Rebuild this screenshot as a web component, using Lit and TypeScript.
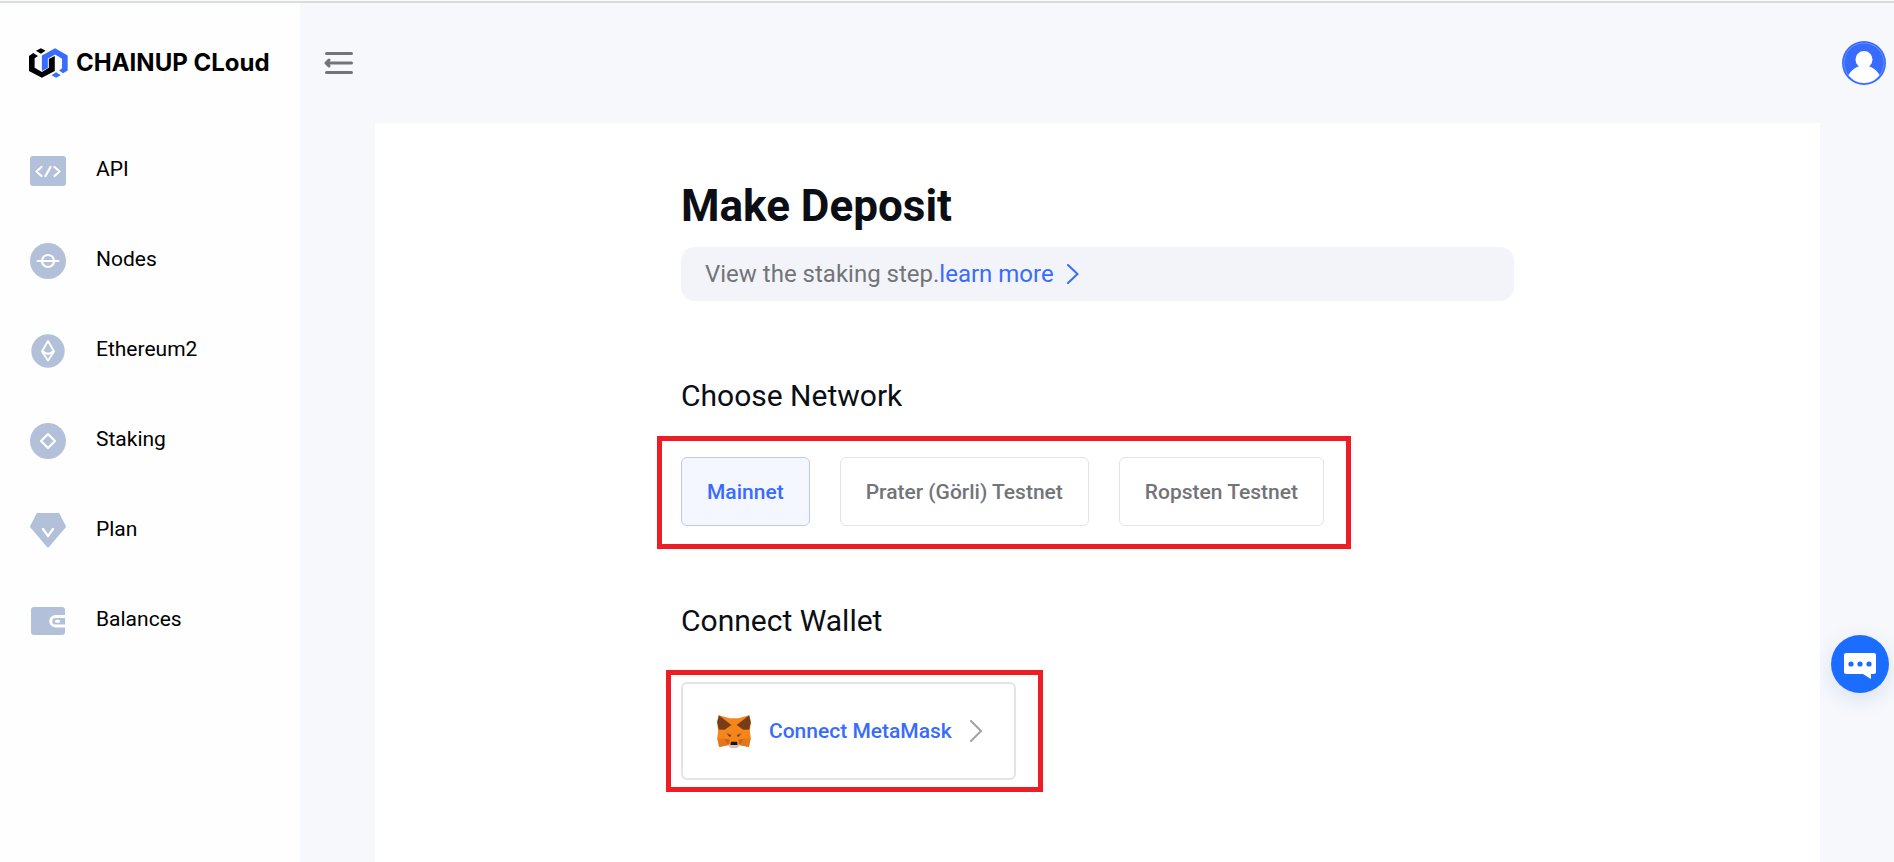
import { LitElement, html, css, svg } from "lit";
import { customElement, state } from "lit/decorators.js";

const navIcons = {
  api: svg`<rect x="0" y="3" width="36" height="30" rx="3" fill="#b2c0d9"/><path d="M11.500 14l-5 4.500 5 4.500M24.500 14l5 4.500-5 4.500M20.500 14l-5 9" fill="none" stroke="#fff" stroke-width="2.200" stroke-linecap="round" stroke-linejoin="round"/>`,
  nodes: svg`<circle cx="18" cy="18" r="18" fill="#b2c0d9"/><circle cx="18" cy="18" r="6" fill="none" stroke="#fff" stroke-width="2.200"/><path d="M7.500 18h21" stroke="#fff" stroke-width="2.200" stroke-linecap="round"/>`,
  eth: svg`<circle cx="18" cy="18" r="16.700" fill="#b2c0d9"/><path d="M18 8l-6 10.500 6 9 6-9zM12 18.500l6 2.500 6-2.500" fill="none" stroke="#fff" stroke-width="2" stroke-linejoin="round"/>`,
  staking: svg`<circle cx="18" cy="18" r="18" fill="#b2c0d9"/><path d="M18 11l7 7-7 7-7-7z" fill="none" stroke="#fff" stroke-width="2.200" stroke-linejoin="round"/>`,
  plan: svg`<path d="M7.500 2h21L35 14.500 18 34.500 1 14.500z" fill="#b2c0d9" stroke="#b2c0d9" stroke-width="2" stroke-linejoin="round" transform="translate(0 -1)"/><path d="M13 16l5 7 5-7" fill="none" stroke="#fff" stroke-width="2.200" stroke-linecap="round" stroke-linejoin="round"/>`,
  balances: svg`<rect x="1" y="4" width="34" height="28" rx="3" fill="#b2c0d9"/><path d="M35 13.500H25.500a4.700 4.700 0 0 0 0 9.400H35" fill="none" stroke="#fff" stroke-width="3"/><rect x="25" y="16.700" width="5" height="3" rx="1.500" fill="#fff"/>`,
};

const navItems: { label: string; icon: keyof typeof navIcons }[] = [
  { label: "API", icon: "api" },
  { label: "Nodes", icon: "nodes" },
  { label: "Ethereum2", icon: "eth" },
  { label: "Staking", icon: "staking" },
  { label: "Plan", icon: "plan" },
  { label: "Balances", icon: "balances" },
];

const networks = ["Mainnet", "Prater (Görli) Testnet", "Ropsten Testnet"];

@customElement("app-root")
export class AppRoot extends LitElement {
  @state() private network = "Mainnet";

  static styles = css`
    :host {
      display: flex;
      flex-direction: column;
      min-height: 100vh;
      box-sizing: border-box;
      font-family: Roboto, "Liberation Sans", sans-serif;
      color: #0b0e14;
      background: #f6f8fc;
    }
    *, *::before, *::after { box-sizing: border-box; }
    svg { display: block; flex: none; }
    a { color: inherit; text-decoration: none; }
    button { font: inherit; cursor: pointer; }
    h1, h2, p { margin: 0; }
    .topline { height: 3px; background: #dadddd; border-top: 1px solid #fafbfb; }
    .shell { display: flex; flex: 1; }
    .sidebar { flex: none; width: 300px; background: #fefefe; }
    .logo {
      display: flex; align-items: center; gap: 8px; height: 120px; padding-left: 29px;
      font: 700 24px/30px Inter, sans-serif; color: #000;
    }
    .nav { padding-top: 3px; }
    .nav a { display: flex; align-items: center; gap: 30px; height: 90px; padding-left: 30px; color: #000; }
    .nav span { font-size: 21px; line-height: 24px; padding-bottom: 4px; }
    .main { display: flex; flex-direction: column; flex: 1; min-width: 0; }
    .header { display: flex; align-items: center; justify-content: space-between; height: 120px; padding: 0 8px 0 24px; }
    .icon-button { padding: 0; border: 0; background: none; border-radius: 50%; }
    .panel { flex: 1; margin: 0 74px 0 75px; padding: 56px 24px 82px; background: #fff; }
    .content { max-width: 833px; margin: 0 auto; }
    h1 { font-size: 44px; line-height: 54px; font-weight: 700; }
    .notice {
      display: flex; align-items: center; height: 54px; margin-top: 14px; padding: 0 24px;
      border-radius: 14px; background: #f3f4f9; color: #727478; font-size: 24px;
    }
    .notice a { display: flex; align-items: center; gap: 13px; color: #386bff; }
    h2 { font-size: 30px; line-height: 38px; font-weight: 400; }
    .network, .wallet { margin-top: 76px; }
    .marked { position: relative; display: flex; width: fit-content; margin-top: 42px; }
    .marked::after { content: ""; position: absolute; border: 5px solid #ee1c25; pointer-events: none; }
    .choices { gap: 30px; }
    .choices::after { inset: -21px -27px -23px -24px; }
    .choice {
      height: 69px; padding: 0 25px; border: 1px solid #e4e4e6; border-radius: 6px;
      background: #fff; color: #727478; font-size: 21px; font-weight: 500; white-space: nowrap;
    }
    .choice[aria-pressed="true"] { border-color: #b8c9ff; background: #f4f7ff; color: #386bff; }
    .connectors::after { inset: -12px -27px -12px -15px; }
    .connect {
      display: flex; align-items: center; height: 98px; padding: 0 32px 0 34px; border: 2px solid #e3e4ea;
      border-radius: 6px; background: #fff; color: #386bff; font-size: 21px; font-weight: 500;
    }
    .connect span { margin: 0 18px; }
    .chat {
      position: fixed; right: 5px; bottom: 169px; width: 58px; height: 58px; padding: 0; border: 0;
      border-radius: 50%; background: #1b6dff; box-shadow: 0 6px 20px rgba(60, 100, 170, 0.16);
    }
  `;

  render() {
    return html`
      <div class="topline"></div>
      <div class="shell">
        <aside class="sidebar">
          <a class="logo" href="#">
            <svg width="39" height="30" viewBox="0 0 118 90" aria-hidden="true">
              <path d="M21 8L36 0l14 8-14 9zM0 24l13-9 14 9-10 7v28l22 13 21-13V33l18-9v45L39 90 0 69z" fill="#000"/>
              <path d="M39 22L79 0l38 22v46l-14 8-12-8 9-7V32L79 19 57 32v28l-18 9zM68 82l14-9 14 9-14 8z" fill="#386bff"/>
            </svg>
            <span>CHAINUP CLoud</span>
          </a>
          <nav class="nav">
            ${navItems.map(
              (item) => html`<a href="#">
                <svg width="36" height="36" viewBox="0 0 36 36" aria-hidden="true">${navIcons[item.icon]}</svg>
                <span>${item.label}</span>
              </a>`
            )}
          </nav>
        </aside>
        <main class="main">
          <header class="header">
            <button class="icon-button" aria-label="Collapse menu">
              <svg width="29" height="24" viewBox="0 0 29 24" fill="none" stroke="#727478" stroke-width="3" stroke-linecap="round" stroke-linejoin="round">
                <path d="M2.500 2.500h25M2.500 12h25M2.500 21.500h25M5 9l-3 3 3 3"/>
              </svg>
            </button>
            <button class="icon-button" aria-label="Account">
              <svg width="44" height="44" viewBox="0 0 44 44">
                <circle cx="22" cy="22" r="22" fill="#386bff"/>
                <circle cx="22" cy="22" r="20" fill="none" stroke="#fff" stroke-opacity="0.300" stroke-width="0.800"/>
                <circle cx="22" cy="18.500" r="8.500" fill="#fff"/>
                <path d="M6.500 34C11 27 16 24.500 22 24.500S33 27 37.500 34C34 39 28 42 22 42S10 39 6.500 34z" fill="#fff"/>
              </svg>
            </button>
          </header>
          <section class="panel">
            <div class="content">
              <h1>Make Deposit</h1>
              <div class="notice">
                <span>View the staking step.</span>
                <a href="#">learn more
                  <svg width="12" height="20" viewBox="0 0 12 20" fill="none" stroke="#386bff" stroke-width="2" stroke-linecap="round"><path d="M1 1l9.500 9L1 19"/></svg>
                </a>
              </div>
              <h2 class="network">Choose Network</h2>
              <div class="marked choices">
                ${networks.map(
                  (name) => html`<button
                    class="choice"
                    aria-pressed=${this.network === name ? "true" : "false"}
                    @click=${() => (this.network = name)}
                  >${name}</button>`
                )}
              </div>
              <h2 class="wallet">Connect Wallet</h2>
              <div class="marked connectors">
                <button class="connect">
                  <svg width="34" height="33" viewBox="0 0 102 100" aria-hidden="true">
                    <path d="M5 1l33 9h26L97 1l5 21-3 27 3 21-6 27-26-5H32L6 97 0 70l3-21-3-27z" fill="#f6851b"/>
                    <path d="M5 1l38 29-20 15-18-1-5-22zM97 1L59 30l20 15 18-1 5-22z" fill="#763d16"/>
                    <path d="M1 72h20l13 19L6 97zM101 72H81L68 91l28 6z" fill="#e4761b"/>
                    <path d="M21 72l17 3-4 16zM81 72l-17 3 4 16zM26 52l17 8-4 8zM76 52l-17 8 4 8z" fill="#cd6116"/>
                    <path d="M30 58l12 3-3 6zM72 58l-12 3 3 6z" fill="#46444f"/>
                    <path d="M32 91l10-5h18l10 5-9 9H41z" fill="#d7c1b3"/>
                    <path d="M42 81h18l2 10H40z" fill="#161616"/>
                  </svg>
                  <span>Connect MetaMask</span>
                  <svg width="12" height="22" viewBox="0 0 12 22" fill="none" stroke="#a0a3ab" stroke-width="2" stroke-linecap="round"><path d="M1 1l10 10L1 21"/></svg>
                </button>
              </div>
            </div>
          </section>
        </main>
      </div>
      <button class="chat" aria-label="Open chat">
        <svg width="58" height="58" viewBox="0 0 58 58">
          <path d="M15 18h28a2 2 0 0 1 2 2v17a2 2 0 0 1-2 2h-3v5l-8-5H15a2 2 0 0 1-2-2V20a2 2 0 0 1 2-2z" fill="#fff"/>
          <circle cx="20" cy="29" r="2.600" fill="#1b6dff"/><circle cx="29" cy="29" r="2.600" fill="#1b6dff"/><circle cx="38" cy="29" r="2.600" fill="#1b6dff"/>
        </svg>
      </button>
    `;
  }
}
